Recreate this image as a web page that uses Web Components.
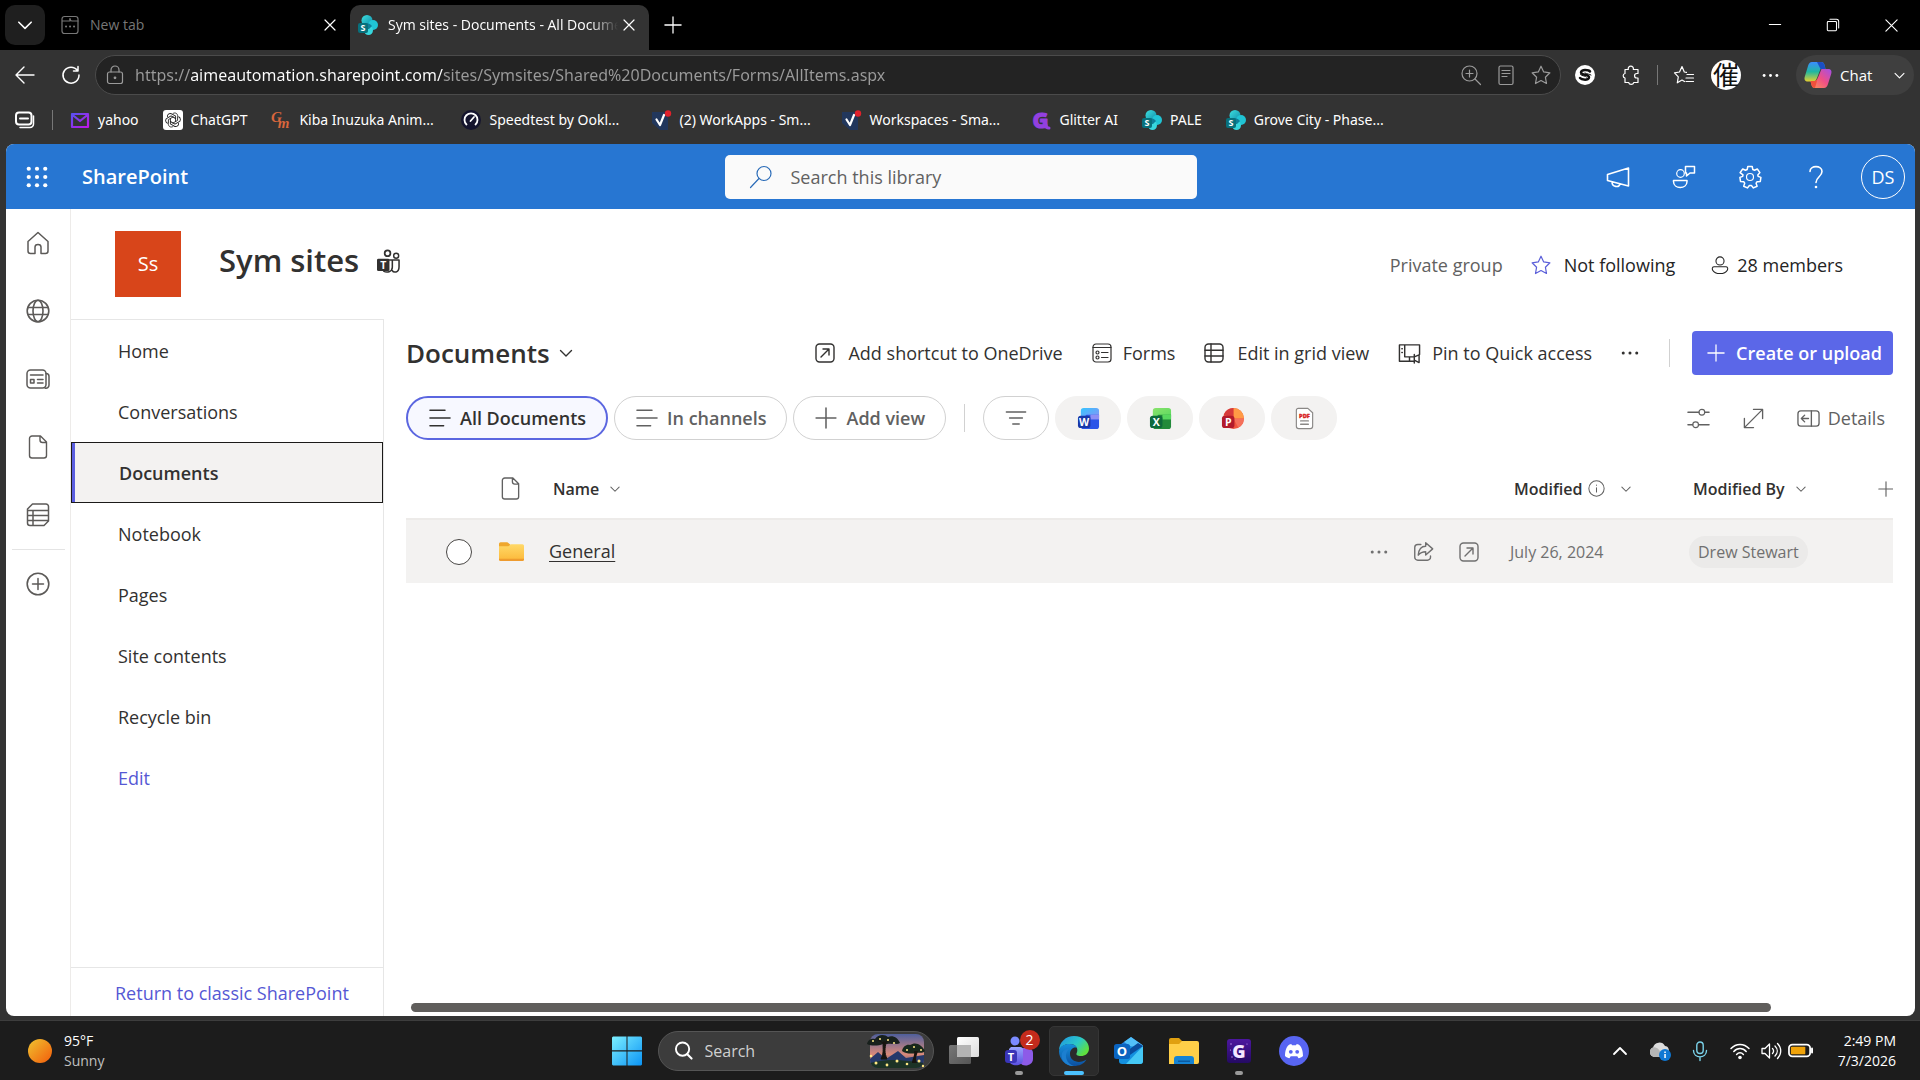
<!DOCTYPE html>
<html lang="en">
<head>
<meta charset="utf-8">
<title>Sym sites - Documents - All Documents</title>
<style>
  html, body { margin: 0; height: 100%; }
  body {
    display: flex; flex-direction: column; background: #333; overflow: hidden;
    font-family: "Open Sans", "Noto Sans", sans-serif; font-size: 18px; line-height: 24px; color: #323130;
  }
  page-frame { flex: 1; min-height: 0; }
</style>
</head>
<body>
<tab-strip></tab-strip>
<address-bar></address-bar>
<bookmark-bar></bookmark-bar>
<page-frame>
  <suite-header slot="top"></suite-header>
  <app-rail slot="rail"></app-rail>
  <site-header slot="site"></site-header>
  <site-nav slot="nav"></site-nav>
  <doc-library></doc-library>
</page-frame>
<task-bar></task-bar>

<script>
const S = (box, body, extra = '') => `<svg viewBox="0 0 ${box} ${box}" fill="none" stroke="currentColor" stroke-width="1.2" stroke-linecap="round" stroke-linejoin="round" ${extra}>${body}</svg>`;
const sharepoint = S(20, `<defs><linearGradient id="a" x1="0" y1="0" x2="1" y2="1"><stop stop-color="#3de0e0"/><stop offset="1" stop-color="#0f8ca8"/></linearGradient></defs>
  <g stroke="none"><circle cx="9" cy="5.500" r="5.500" fill="url(#a)"/><circle cx="15" cy="10" r="5" fill="#20c4d4"/><circle cx="10.500" cy="15.500" r="4.500" fill="#37d6dd"/><path d="M5 9a7 7 0 0 1 9 2l-3 3H5z" fill="#107d98"/><rect x="0" y="8" width="10" height="10" rx="2" fill="#08707c"/><text x="5" y="16" font-size="9" font-weight="700" text-anchor="middle" fill="#fff">S</text></g>`);
const sheet = S(20, `<g stroke="none"><path d="M1 2h16v18H1z" fill="#22375c"/><path d="M1 20h8l-8-7z" fill="#333"/></g><path d="M5.500 9.500l3.500 5.500 4-10" stroke="#fff" stroke-width="2.200"/><circle cx="17" cy="3.500" r="3.200" fill="#e0212b" stroke="none"/>`);
const office = (c1, c2, c3, c4, ch) => S(24, `<defs><linearGradient id="a" x1="0" y1="0" x2="1" y2="1"><stop stop-color="${c1}"/><stop offset="1" stop-color="${c2}"/></linearGradient></defs><g stroke="none"><rect x="4" y="1" width="19" height="12" rx="3" fill="url(#a)"/><path d="M10 8h13v12a3 3 0 0 1-3 3H7a3 3 0 0 1-3-3v-7z" fill="${c3}"/><path d="M14 8h9v5h-9z" fill="${c2}"/><rect x="1" y="9" width="13" height="13" rx="3" fill="${c4}"/><text x="7.500" y="19.500" font-size="11" font-weight="700" text-anchor="middle" fill="#fff">${ch}</text></g>`);
const petal = [0, 60, 120, 180, 240, 300].map(r => `<path d="M10 3.500c2-1.500 5 0 4.600 2.900v4L10 13" transform="rotate(${r} 10 10)"/>`).join('');
const ICONS = {
  chevron: S(16, '<path d="M2.500 5.500L8 11l5.500-5.500" stroke-width="1.400"/>'),
  chevup: S(16, '<path d="M2 11l6-6 6 6" stroke-width="1.800"/>'),
  close: S(16, '<path d="M3 3l10 10M13 3L3 13"/>'),
  plus: S(20, '<path d="M10 1v18M1 10h18" stroke-width="1.400"/>'),
  minimize: S(16, '<path d="M1.500 7.500h13" stroke-width="1.200"/>'),
  restore: S(16, '<rect x="1.500" y="4" width="10.500" height="10.500" rx="1"/><path d="M4.500 1.500h7.500a2.500 2.500 0 0 1 2.500 2.500v7.500"/>'),
  x: S(16, '<path d="M2 2l12 12M14 2L2 14"/>'),
  newtab: S(20, '<path d="M2 6V4a2.500 2.500 0 0 1 2.500-2.500h11A2.500 2.500 0 0 1 18 4v12a2.500 2.500 0 0 1-2.500 2.500h-11A2.500 2.500 0 0 1 2 16V6h8V3.500"/><path d="M10 4a2 2 0 0 0 2 2h6"/><path d="M6 11.500h.1M10 11.500h.1M14 11.500h.1" stroke-width="2"/>'),
  back: S(20, '<path d="M19 10H1.500M9 2L1 10l8 8" stroke-width="1.400"/>'),
  reload: S(20, '<path d="M16.500 5.500A8 8 0 1 0 18 10M17 1.500v4.500h-4.500" stroke-width="1.500"/>'),
  lock: S(20, '<rect x="2.500" y="7" width="15" height="11.500" rx="2"/><path d="M6 7V5a4 4 0 0 1 8 0v2"/><circle cx="10" cy="12.800" r=".8" fill="currentColor"/>'),
  zoomin: S(20, '<circle cx="8.500" cy="8.500" r="7.500"/><path d="M14 14l5.500 5.500M8.500 5v7M5 8.500h7"/>'),
  reader: S(20, '<rect x="3" y="1" width="14" height="18.500" rx="1.500"/><path d="M6 5.500h8M6 8.500h8M6 11.500h5"/>'),
  star: S(20, '<path d="M10 1.200l2.700 5.700 6.200.9-4.500 4.400 1.100 6.300L10 15.500l-5.500 3 1.100-6.300L1.100 7.800l6.200-.9z"/>'),
  sbadge: S(20, '<circle cx="10" cy="10" r="10" fill="#fff" stroke="none"/><path d="M15 6.500c-1-1.500-9-2.500-9 .8 0 3.500 8 1.500 8 5 0 3.500-7.500 2.500-9 .7" stroke="#111" stroke-width="2.500"/><path d="M5.500 9.500c2 2 5 1 6 2.500M16 10c-1.500-1-4-.8-6-2" stroke="#111" stroke-width="1"/>'),
  puzzle: S(20, '<path d="M4 4.500h3.300a2.600 2.600 0 1 1 5 0H17v4h-1.200a2.200 2.200 0 0 0 0 4.500H17v4.500h-4.200a2.700 2.700 0 0 1-5.200 0H4V13a2.300 2.300 0 0 1 0-4.500z"/>'),
  favs: S(20, '<path d="M12.500 7.400L10.300 7 8 1.500 5.500 7l-5 .8 3.800 4-1 6L8 15l2.500 1.500M13 9.500h6.500M12 13h7.500M12 16.500h7.500"/>'),
  dots: S(20, '<g fill="currentColor" stroke="none"><circle cx="2.500" cy="10" r="1.700"/><circle cx="10" cy="10" r="1.700"/><circle cx="17.500" cy="10" r="1.700"/></g>'),
  profile: S(30, '<circle cx="15" cy="15" r="15" fill="#fff" stroke="none"/><text x="15" y="25" font-family="Noto Sans CJK JP" font-size="26" text-anchor="middle" fill="#111" stroke="none">催</text>'),
  copilot: S(28, `<defs><linearGradient id="a" x1="0" y1="0" x2="0" y2="1"><stop stop-color="#3b8dff"/><stop offset=".5" stop-color="#20b7a0"/><stop offset="1" stop-color="#e5d02f"/></linearGradient><linearGradient id="b" x1="1" y1="0" x2="0" y2="1"><stop stop-color="#a24fe8"/><stop offset=".5" stop-color="#ef4f86"/><stop offset="1" stop-color="#fb9a50"/></linearGradient></defs><g stroke="none"><path d="M8 1h9c2 0 3 1 3.500 3l1 4h-5l-3.500 9c-1 2.500-2 3.500-4 3.500H4c-3 0-4-2-3.300-4.500L4 5C4.800 2.500 6 1 8 1z" fill="url(#a)"/><path d="M13 1h4c2 0 3 1 3.500 3l1 4h-5z" fill="#1b4ec4"/><path d="M20 27h-9c-2 0-3-1-3.500-3l-1-4H10c2 0 3-1 4-3.500L17.500 8H24c3 0 4 2 3.300 4.500L24 23c-.8 2.500-2 4-4 4z" fill="url(#b)"/><path d="M11 27c-2 0-3-1-3.500-3l-1-4H10c1.500 0 2.500-.5 3.500-2z" fill="#f0503c"/></g>`),
  collapse: S(20, '<rect x="1" y="2.500" width="15.500" height="12" rx="3" stroke-width="2"/><path d="M5 8.500h8" stroke-width="2"/><path d="M18.500 6v8a3.500 3.500 0 0 1-3.500 3.500H5" stroke-width="1.500"/>'),
  yahoo: S(20, '<defs><linearGradient id="a" x1="0" y1="0" x2="1" y2="1"><stop stop-color="#5a50f0"/><stop offset="1" stop-color="#c016e8"/></linearGradient></defs><path d="M2 4h16v13H2zM2 4.500l8 6.500 8-6.500" stroke="url(#a)" stroke-width="2.200"/>'),
  chatgpt: S(20, `<rect width="20" height="20" rx="3" fill="#fff" stroke="none"/><g stroke="#222" stroke-width=".9">${petal}</g>`),
  gm: S(20, '<text x="0" y="12" font-family="Liberation Serif, serif" font-style="italic" font-weight="700" font-size="15" fill="#d9663c" stroke="none">G<tspan dx="-4" dy="6">m</tspan></text>'),
  speed: S(20, '<circle cx="10" cy="10" r="10" fill="#15152e" stroke="none"/><path d="M5.500 14.500a6.500 6.500 0 1 1 9 0" stroke="#fff" stroke-width="1.800"/><path d="M9.500 11l3.500-4" stroke="#fff" stroke-width="1.800"/>'),
  glitter: S(20, '<text x="9.500" y="17.500" font-size="22" font-weight="800" text-anchor="middle" fill="#9340e0" stroke="#9340e0">G</text><path d="M15 15c0 2 1 3 3 3" stroke="#9340e0" stroke-width="3"/>'),
  sheet, sharepoint,
  waffle: S(24, '<g fill="currentColor" stroke="none"><circle cx="3" cy="3" r="2.300"/><circle cx="12" cy="3" r="2.300"/><circle cx="21" cy="3" r="2.300"/><circle cx="3" cy="12" r="2.300"/><circle cx="12" cy="12" r="2.300"/><circle cx="21" cy="12" r="2.300"/><circle cx="3" cy="21" r="2.300"/><circle cx="12" cy="21" r="2.300"/><circle cx="21" cy="21" r="2.300"/></g>'),
  search: S(24, '<circle cx="15" cy="8.500" r="7"/><path d="M10 13.500L1.500 22.500"/>'),
  megaphone: S(24, '<path d="M1.500 9.500L22.500 3v18L1.500 15.500zM6 17c0 5 7 6 8 2" stroke-width="1.600"/>'),
  feedback: S(24, '<circle cx="8.500" cy="8.500" r="3.800"/><path d="M1.500 15.500h13.500v1c0 8-13.500 8-13.500 0zM13.500 1.500h9v6.500h-4.500l-3.500 3V8h-1z" stroke-width="1.500"/>'),
  gear: S(24, '<circle cx="12" cy="12" r="3.500"/><path d="M9.800 1.500h4.400l.6 3 1.700.8L19.300 4l2.600 3.600-2.100 2.300.3 1.500 2.800 1-.6 4-3.200.3-1 1.500 1 3-3.700 1.700-2-2.400h-2l-2 2.400-3.700-1.700 1-3-1-1.500-3.200-.3-.6-4 2.800-1 .3-1.500L2.100 7.600 4.700 4l2.800 1.300 1.700-.8z" stroke-width="1.500"/>'),
  help: S(24, '<path d="M6 6.500C6 0 18 0 18 6.500c0 5-6 5.500-6 11" stroke-width="1.600"/><circle cx="12" cy="22" r="1.300" fill="currentColor" stroke="none"/>'),
  home: S(24, '<path d="M2 10.500L12 1.500l10 9V20a2.500 2.500 0 0 1-2.500 2.500H15V16c0-3.500-6-3.500-6 0v6.500H4.500A2.500 2.500 0 0 1 2 20z" stroke-width="1.500"/>'),
  globe: S(24, '<circle cx="12" cy="12" r="10.800"/><ellipse cx="12" cy="12" rx="5" ry="10.800"/><path d="M2 8.500h20M2 15.500h20" />', 'style="stroke-width:1.600"'),
  news: S(24, '<rect x="1" y="3" width="19" height="18" rx="3.500"/><path d="M20 6.500c2 0 3 1 3 3V18a3 3 0 0 1-4 3M4.500 8h12.500M11.500 12.500H17M11.500 16H17M4.500 12.500h3.500V16H4.500z"/>', 'style="stroke-width:1.500"'),
  file: S(24, '<path d="M6 1h8.500L20.500 7v13.500a2.500 2.500 0 0 1-2.500 2.500H6a2.500 2.500 0 0 1-2.500-2.500v-17A2.500 2.500 0 0 1 6 1zM14 1v4a2.500 2.500 0 0 0 2.500 2.500h4" stroke-width="1.400"/>'),
  list: S(24, '<path d="M6.500 1H20a2.500 2.500 0 0 1 2.500 2.500V18L18 22.500H4A2.500 2.500 0 0 1 1.500 20V6zM1.500 7.500h21M1.500 12.500h21M1.500 17.500H22M7 7.500v15"/>', 'style="stroke-width:1.500"'),
  add: S(24, '<circle cx="12" cy="12" r="10.800" stroke-width="1.600"/><path d="M12 6.500v11M6.500 12h11" stroke-width="1.500"/>'),
  teams: S(24, '<circle cx="11" cy="3.500" r="3" stroke-width="1.800"/><circle cx="20" cy="6" r="2.600" stroke-width="1.500"/><path d="M13 10.500h10v7c0 7-6 6-7 4M7 22c3 2 9 1 9-4v-7.500" stroke-width="1.600"/><rect x="0" y="9" width="13" height="13" rx="1.500" fill="currentColor" stroke="none"/><text x="6.500" y="19.500" font-size="11" font-weight="700" text-anchor="middle" fill="#fff" stroke="none">T</text>'),
  person: S(20, '<circle cx="10" cy="5.500" r="4.500"/><path d="M3.500 12h13c4 0 2.500 7.500-6.500 7.500S-.500 12 3.500 12z"/>'),
  shortcut: S(20, '<rect x="1" y="1" width="18" height="18" rx="3.500"/><path d="M6 14l8-8M8 6h6v6"/>', 'style="stroke-width:1.400"'),
  forms: S(20, '<rect x="1" y="1" width="18" height="18" rx="3"/><path d="M1 4.500h18M9.500 9.500H16M9.500 14.500H16"/><circle cx="5.500" cy="9.500" r="1.500"/><circle cx="5.500" cy="14.500" r="1.500"/>'),
  grid: S(20, '<rect x="1" y="1" width="18" height="18" rx="3.500"/><path d="M7 1v18M1 7.200h18M1 13h18"/>', 'style="stroke-width:1.400"'),
  pin: S(24, '<path d="M12 20H1.500V3h21v10M7 3v12.500h10M4 7h.5M4 11h.5M17 13v7M17 15.500l5-2v8l-5-2.500M12 16v4h5v2"/>', 'style="stroke-width:1.500"'),
  lines: S(24, '<path d="M1 3.500h16.500M1 12h22M1 20.500h15" stroke-width="1.500"/>'),
  filter: S(24, '<path d="M1.500 5.500h21M5 12h14M8.500 18.500h7" stroke-width="1.600"/>'),
  sliders: S(24, '<path d="M1 5.500h11.500M18.500 5.500H23M1 18.500h5M12 18.500h11" stroke-width="1.500"/><circle cx="15.500" cy="5.500" r="3"/><circle cx="9" cy="18.500" r="3"/>'),
  expand: S(24, '<path d="M2.500 21.500l19-19M12 2.500h9.500V12M2.500 12v9.500H12" stroke-width="1.400"/>'),
  panel: S(24, '<rect x="1" y="4" width="22" height="16" rx="3"/><path d="M15 4v16M12 12H4.500M8 8.500L4.500 12 8 15.500"/>', 'style="stroke-width:1.400"'),
  info: S(20, '<circle cx="10" cy="10" r="9"/><path d="M10 9v5M10 6v.2"/>'),
  share: S(24, '<path d="M9 4H5.500A3.500 3.500 0 0 0 2 7.500v11A3.500 3.500 0 0 0 5.500 22h11a3.500 3.500 0 0 0 3.500-3.500V17"/><path d="M14.500 2l8 7-8 7v-3.800c-4 0-6 .8-8.500 4C6.500 9.500 10 6 14.500 6z"/>', 'style="stroke-width:1.600"'),
  folder: S(24, '<defs><linearGradient id="a" x1="0" y1="0" x2="0" y2="1"><stop stop-color="#ffd968"/><stop offset="1" stop-color="#fcb839"/></linearGradient></defs><g stroke="none"><path d="M0 4.500A1.500 1.500 0 0 1 1.500 3H8l3 2.500V9H0z" fill="#efa72e"/><path d="M0 7h9l2.500-2h11A1.500 1.500 0 0 1 24 6.500v13a1.500 1.500 0 0 1-1.500 1.500h-21A1.500 1.500 0 0 1 0 19.500z" fill="url(#a)"/><path d="M0 19h24v.5a1.500 1.500 0 0 1-1.500 1.500h-21A1.500 1.500 0 0 1 0 19.500z" fill="#ee9b2e"/></g>'),
  word: office('#35c5ff', '#8d8ff5', '#2b55e8', '#1838a8', 'W'),
  excel: office('#8ae36c', '#57d85e', '#228a3a', '#0e6a3c', 'X'),
  ppt: S(24, '<g stroke="none"><circle cx="13" cy="12" r="11" fill="#f0563d"/><path d="M13 1a11 11 0 0 1 11 11H13z" fill="#ff9a45"/><path d="M13 1A11 11 0 0 0 3 8l10 4z" fill="#d53a3a"/><path d="M13 12h11a11 11 0 0 1-6 9.500z" fill="#f5705a"/><rect x="1" y="9" width="13" height="13" rx="3" fill="#b31b2b"/><text x="7.500" y="19.500" font-size="11" font-weight="700" text-anchor="middle" fill="#fff">P</text></g>'),
  pdf: S(24, '<path d="M5.500 1.500h10L20.500 6v14a2.500 2.500 0 0 1-2.500 2.500H6A2.500 2.500 0 0 1 3.500 20V3.500a2 2 0 0 1 2-2z" fill="#fff" stroke="#8a8886"/><text x="12" y="11" font-size="6" font-weight="800" text-anchor="middle" fill="#d81e1e" stroke="#d81e1e" stroke-width=".3">PDF</text><path d="M8 14.500h8M8 18h8" stroke="#8a8886" stroke-width="1.500"/>'),
  sun: S(24, '<defs><linearGradient id="a" x1="0" y1="0" x2="1" y2="1"><stop offset=".1" stop-color="#f0b92c"/><stop offset=".9" stop-color="#f2660f"/></linearGradient></defs><circle cx="12" cy="12" r="12" fill="url(#a)" stroke="none"/>'),
  start: S(30, '<defs><linearGradient id="a" gradientUnits="userSpaceOnUse" x1="0" y1="0" x2="30" y2="30"><stop stop-color="#7df0ff"/><stop offset="1" stop-color="#0a93f5"/></linearGradient></defs><path d="M1 .5h13.500v13.700H0V1.500zM15.500.5H29l1 1v12.700H15.500zM0 15.500h14.500v14H1l-1-1zM15.500 15.500H30v13l-1 1H15.500z" fill="url(#a)" stroke="none"/>'),
  find: S(20, '<circle cx="9" cy="8.500" r="7" stroke-width="2"/><path d="M14 14l4.500 4.500" stroke-width="2.200"/>'),
  taskview: S(30, '<defs><linearGradient id="a" x1="0" y1="0" x2="1" y2="1"><stop stop-color="#777"/><stop offset="1" stop-color="#555"/></linearGradient><linearGradient id="b" x1="0" y1="0" x2="1" y2="1"><stop stop-color="#fff"/><stop offset="1" stop-color="#dcdcdc"/></linearGradient></defs><g stroke="none"><rect x="0" y="9" width="22" height="19" rx="1.500" fill="url(#a)"/><rect x="8" y="1" width="22" height="20" rx="1.500" fill="url(#b)"/><path d="M8 9h14v12H9.500A1.500 1.500 0 0 1 8 19.500z" fill="#b4b4b4"/></g>'),
  teamsapp: S(30, '<defs><linearGradient id="a" x1="0" y1="0" x2="0" y2="1"><stop stop-color="#9aa6ff"/><stop offset="1" stop-color="#5a4fe0"/></linearGradient></defs><g stroke="none"><circle cx="11" cy="5" r="4.500" fill="#7b8bff"/><path d="M17 12h7a5 5 0 0 1 5 5v6c0 7-11 9-13 3z" fill="#8d5be8"/><path d="M7 11h9a3 3 0 0 1 3 3v10c0 7-14 7-14 0V13z" fill="url(#a)"/><rect x="1" y="14" width="12" height="13" rx="3" fill="#3a35b8"/><text x="7" y="24.500" font-size="11" font-weight="700" text-anchor="middle" fill="#fff">T</text></g>'),
  edge: S(30, '<defs><linearGradient id="a" x1="0" y1="0" x2="1" y2=".6"><stop offset=".1" stop-color="#219be0"/><stop offset=".6" stop-color="#2bc8c8"/><stop offset="1" stop-color="#5fe03e"/></linearGradient><linearGradient id="b" x1="0" y1="0" x2="0" y2="1"><stop stop-color="#1590dc"/><stop offset="1" stop-color="#0c4fa0"/></linearGradient></defs><g stroke="none"><path d="M0 15C0 6 7 0 15 0c9 0 15 6 15 12.500 0 5-4 7.500-8 7.500-4 0-5-1.500-4.500-2.500C20 13 17 8 11 8 5 8 1 11 0 15z" fill="url(#a)"/><path d="M0 15c1-4.500 5-7 10.500-7 4 0 6.500 1.500 7.500 4-3-1.500-7 1-7 6 0 6 6 9 12 7.500 2-.5 3.500-1.500 4.500-2C25 28 20 30 15 30 6 30 0 23 0 15z" fill="url(#b)"/><path d="M11 12.500c-3 2-5 6-3.500 10.500 1 3.500 4 6 7.500 7-9 .5-14-6.500-12-13 1.500-3 4.500-4.800 8-4.500z" fill="#1c7fd0"/></g>'),
  outlook: S(30, '<g stroke="none"><path d="M5 9.500L17 1l12 8.500L17 18z" fill="#1f7ad8"/><path d="M10 6l7-5 12 8.500-6 5z" fill="#52c0f8"/><path d="M5 11l24-1v15a3 3 0 0 1-3 3H8a3 3 0 0 1-3-3z" fill="#1490df"/><path d="M29 10v15a3 3 0 0 1-3 3H12z" fill="#45c8f5"/><path d="M29 10L13 21v-6L24 7z" fill="#0a4c9c"/><rect x="0" y="8" width="16" height="15" rx="2.500" fill="#0b64c0"/><text x="8" y="20" font-size="13" font-weight="700" text-anchor="middle" fill="#fff">O</text></g>'),
  explorer: S(30, '<g stroke="none"><path d="M0 4a2 2 0 0 1 2-2h8l3 3v5H0z" fill="#e0a010"/><path d="M0 8h10l3-3h15a2 2 0 0 1 2 2v19a2 2 0 0 1-2 2H0z" fill="#ffcf48"/><path d="M5 28v-5a3 3 0 0 1 3-3h14a3 3 0 0 1 3 3v5z" fill="#1583d4"/><path d="M9 24.500h12v1.500H9z" fill="#0c5aa0"/></g>'),
  gapp: S(24, '<defs><linearGradient id="a" x1="0" y1="0" x2="0" y2="1"><stop stop-color="#4d17a0"/><stop offset="1" stop-color="#240a63"/></linearGradient></defs><rect width="24" height="24" rx="3" fill="url(#a)" stroke="none"/><text x="12" y="18.500" font-size="18" font-weight="800" text-anchor="middle" fill="#f3e8ff" stroke="none">G</text><g fill="#c89bff" stroke="none"><circle cx="4" cy="5" r=".7"/><circle cx="5" cy="18" r=".7"/><circle cx="8" cy="20" r=".6"/><circle cx="20" cy="5" r=".6"/><circle cx="3.500" cy="11" r=".6"/></g>'),
  discord: S(30, '<g stroke="none"><circle cx="15" cy="15" r="15" fill="#5865f2"/><path d="M10.500 8.500l1.800-.5.700 1.300h4l.7-1.300 1.800.5c3 1.500 4.500 6.500 4.500 11.500-1.500 1.500-3 2-4.500 2.300l-1.200-2h-6.600l-1.200 2C9 22 7.500 21.500 6 20c0-5 1.500-10 4.500-11.500z" fill="#fff"/><circle cx="11.800" cy="15.800" r="1.900" fill="#5865f2"/><circle cx="18.200" cy="15.800" r="1.900" fill="#5865f2"/></g>'),
  cloud: S(22, '<g stroke="none"><path d="M5 17a5 5 0 0 1-1-9.500A6.500 6.500 0 0 1 16 6c3 0 4 3 4 5s-2 6-5 6z" fill="#dcdcdc"/><path d="M5 17a5 5 0 0 1-1-9.500c4-1 8 3 9 9.500z" fill="#b5b5b5"/><circle cx="16" cy="15" r="6" fill="#0f78d4"/><path d="M15.300 14h1.500v4h-1.500zM15.300 11.500h1.500V13h-1.500z" fill="#fff"/></g>'),
  mic: S(20, '<g stroke="#7bd3ea" stroke-width="1.400"><rect x="6.800" y="1" width="6.400" height="11.500" rx="3.200"/><path d="M3.500 9.500c0 8.500 13 8.500 13 0M10 16v3.500"/></g>'),
  wifi: S(20, '<path d="M1 7.500c5-5.500 13-5.500 18 0M3.800 10.500c3.500-4 9-4 12.400 0M6.600 13.500c2-2.200 4.800-2.200 6.800 0" stroke-width="1.500"/><circle cx="10" cy="16.500" r="1.800" fill="currentColor" stroke="none"/>'),
  speaker: S(20, '<path d="M1 7.500h3L8.500 3v14L4 12.500H1zM11.500 7.500c1.300 1.500 1.300 3.500 0 5M14 5c3 3 3 7 0 10M16.500 2.500c4.300 4.500 4.300 10.500 0 15" stroke-width="1.300"/>'),
  battery: S(26, '<rect x="1" y="7" width="22" height="12" rx="3.500" stroke-width="1.800"/><rect x="3" y="9" width="15" height="8" rx="1" fill="#f0a30a" stroke="none"/><path d="M25 11v4" stroke-width="2"/>'),
  scene: `<svg viewBox="0 0 60 38"><defs><linearGradient id="a" x1="0" y1="0" x2="0" y2="1"><stop stop-color="#4f5f9c"/><stop offset=".6" stop-color="#d98a7a"/><stop offset="1" stop-color="#33406a"/></linearGradient><clipPath id="c"><rect x="4" y="2" width="54" height="34" rx="8"/></clipPath></defs><g clip-path="url(#c)"><path d="M4 2h54v34H4z" fill="url(#a)"/><path d="M4 27l8-7 8 7 12-8 8 7 18-3v15H4z" fill="#26396b"/><path d="M4 31c18-5 34-3 54 0v5H4z" fill="#1c3326"/></g><path d="M1 12c1-5 5-6 8-5 3-5 10-5 13-2 5-2 10 1 12 6-3 2-6 0-8 1-4-1-6 1-9 0-5 2-12 2-16 0z" fill="#17201c"/><path d="M17 11l-5-3M18 11l6-3M17 10c0 8 1 11-2 17h6c-3-7-2-10-1-17z" fill="#17140f" stroke="#17140f"/><path d="M36 19c1-5 5-7 8-6 6-4 12 0 15 6-3 3-6 1-9 2-4 1-10 1-14-2z" fill="#17281c"/><path d="M48 19c1 5-2 8-2 12h5c-2-5 0-8 1-12z" fill="#17140f"/><g fill="#ffe884"><circle cx="7" cy="9" r="1"/><circle cx="14" cy="7" r="1"/><circle cx="22" cy="8" r="1"/><circle cx="28" cy="11" r="1"/><circle cx="41" cy="18" r="1"/><circle cx="48" cy="15" r="1"/><circle cx="55" cy="18" r="1"/><circle cx="5" cy="24" r="1.300"/><circle cx="10" cy="31" r="1.500"/><circle cx="21" cy="33" r="1.400"/><circle cx="31" cy="29" r="1.500"/><circle cx="41" cy="32" r="1.300"/><circle cx="53" cy="29" r="1.500"/><circle cx="57" cy="34" r="1.200"/></g></svg>`
};

/* Base class: puts a stylesheet and markup in an open shadow root. */
const RESET = `
  :host, * { box-sizing: border-box; }
  button, input { font: inherit; color: inherit; background: none; border: 0; padding: 0; margin: 0; outline: 0; }
  button { display: inline-flex; align-items: center; justify-content: center; white-space: nowrap; }
  a { color: inherit; text-decoration: none; }
  .grow { flex: 1; }`;
class View extends HTMLElement {
  constructor() {
    super();
    const t = document.createElement('template');
    t.innerHTML = `<style>${RESET}${this.constructor.css}</style>${this.constructor.html}`;
    this.attachShadow({ mode: 'open' }).append(t.content.cloneNode(true));
  }
}
const define = (name, css, html) => customElements.define(name, class extends View {
  static css = css;
  static html = html;
});

/* <ui-icon name="…" style="--s: 24px"> */
customElements.define('ui-icon', class extends HTMLElement {
  connectedCallback() {
    if (this.shadowRoot) return;
    this.attachShadow({ mode: 'open' }).innerHTML = `<style>
      :host { display: inline-flex; flex: none; width: var(--s, 20px); height: var(--s, 20px); }
      svg { width: 100%; height: 100%; overflow: visible; }</style>${ICONS[this.getAttribute('name')]}`;
    this.setAttribute('aria-hidden', 'true');
  }
});
const icon = (name, size = 20) => `<ui-icon name="${name}" style="--s:${size}px"></ui-icon>`;

define('tab-strip', `
  :host { display: flex; height: 50px; background: #000; color: #fff; font-size: 14px; line-height: 20px; align-items: flex-end; padding-left: 5px; }
  .menu { width: 40px; height: 40px; border-radius: 10px; background: #1f1f1f; margin-bottom: 5px; }
  .tab { display: flex; align-items: center; height: 45px; gap: 10px; }
  .idle { width: 305px; padding: 0 12px 5px 15px; color: #777; }
  .idle button { color: #fff; }
  .active { width: 299px; padding: 0 12px 5px 8px; background: #333; border-radius: 10px 10px 0 0; }
  .title { flex: 1; min-width: 0; white-space: nowrap; overflow: hidden; }
  .active .title { mask-image: linear-gradient(to right, #000 88%, transparent); }
  .active button { margin-left: -7px; }
  .add { margin: 0 0 16px 15px; }
  .win { display: flex; height: 50px; align-items: center; }
  .win button { width: 58px; height: 48px; }`,
  `<button class="menu" aria-label="Tab actions">${icon('chevron', 18)}</button>
   <div class="tab idle">${icon('newtab', 20)}<span class="title">New tab</span><button aria-label="Close tab">${icon('close', 16)}</button></div>
   <div class="tab active">${icon('sharepoint', 20)}<span class="title">Sym sites - Documents - All Documents</span><button aria-label="Close tab">${icon('close', 16)}</button></div>
   <button class="add" aria-label="New tab">${icon('plus', 18)}</button>
   <span class="grow"></span>
   <div class="win"><button aria-label="Minimize">${icon('minimize', 14)}</button><button aria-label="Restore">${icon('restore', 14)}</button><button aria-label="Close">${icon('x', 15)}</button></div>`);

define('address-bar', `
  :host { display: flex; align-items: center; height: 50px; padding: 0 6px 0 15px; color: #fff; font-size: 16px; line-height: 22px; gap: 26px; }
  .box { flex: 1; display: flex; align-items: center; gap: 17px; height: 40px; margin: 0 -12px; border: 1px solid #4b4b4b; border-radius: 20px; background: #232323; color: #9b9b9b; padding: 0 9px; }
  .box label { display: flex; flex: 1; align-items: center; gap: 10px; }
  input { flex: 1; height: 30px; font-family: "Noto Sans", sans-serif; color: transparent; background: linear-gradient(to right, #9b9b9b 56px, #fff 56px 308px, #9b9b9b 308px); -webkit-background-clip: text; background-clip: text; }
  .tools { display: flex; align-items: center; gap: 15px; }
  hr { width: 1px; height: 20px; border: 0; background: #777; margin: 0 -1px; }
  .chat { height: 40px; width: 118px; border-radius: 20px; background: #3f3f3f; gap: 8px; padding: 0 8px; justify-content: flex-start; font-size: 15px; }
  .set { display: flex; align-items: center; gap: 17px; }
  .set .ext { margin-left: 9px; }
  .set .more { margin-left: 4px; }`,
  `<button aria-label="Back">${icon('back', 20)}</button>
   <button aria-label="Refresh">${icon('reload', 20)}</button>
   <div class="box">
     <label>${icon('lock', 20)}<input aria-label="Address" value="https://aimeautomation.sharepoint.com/sites/Symsites/Shared%20Documents/Forms/AllItems.aspx"></label>
     <div class="tools"><button aria-label="Zoom">${icon('zoomin', 20)}</button><button aria-label="Reader">${icon('reader', 20)}</button><button aria-label="Favorite">${icon('star', 20)}</button></div>
   </div>
   <div class="set">
     <button aria-label="Extension">${icon('sbadge', 20)}</button>
     <button class="ext" aria-label="Extensions">${icon('puzzle', 20)}</button>
     <hr>
     <button aria-label="Favorites">${icon('favs', 20)}</button>
     <button aria-label="Profile">${icon('profile', 30)}</button>
     <button class="more" aria-label="Settings">${icon('dots', 17)}</button>
     <button class="chat">${icon('copilot', 28)}Chat<span class="grow"></span>${icon('chevron', 13)}</button>
   </div>`);

const mark = (ic, text, long) => `<a href="#" class="${long ? 'long' : ''}">${icon(ic, 20)}<span>${text}</span></a>`;
define('bookmark-bar', `
  :host { display: flex; align-items: center; height: 44px; padding: 0 15px 4px; color: #fff; font-size: 14px; line-height: 20px; gap: 24px; font-family: "Noto Sans", sans-serif; }
  hr { width: 1px; height: 20px; border: 0; background: #777; margin: 0 -7px; }
  a { display: flex; align-items: center; gap: 8px; white-space: nowrap; }
  .long span { width: 138px; }`,
  `<button aria-label="Collapse">${icon('collapse', 20)}</button><hr>
   ${mark('yahoo', 'yahoo')}${mark('chatgpt', 'ChatGPT')}${mark('gm', 'Kiba Inuzuka Anim...', 1)}${mark('speed', 'Speedtest by Ookl...', 1)}
   ${mark('sheet', '(2) WorkApps - Sm...', 1)}${mark('sheet', 'Workspaces - Sma...', 1)}${mark('glitter', 'Glitter AI')}${mark('sharepoint', 'PALE')}${mark('sharepoint', 'Grove City - Phase...', 1)}`);

define('page-frame', `
  :host { display: flex; flex-direction: column; margin: 0 5px 4px 6px; background: #fff; border-radius: 8px; overflow: hidden; }
  .body { display: flex; flex: 1; min-height: 0; }
  .site { display: flex; flex-direction: column; flex: 1; min-width: 0; }
  .cols { display: flex; flex: 1; min-height: 0; }
  ::slotted(doc-library) { flex: 1; min-width: 0; }`,
  `<slot name="top"></slot>
   <div class="body"><slot name="rail"></slot>
     <div class="site"><slot name="site"></slot><div class="cols"><slot name="nav"></slot><slot></slot></div></div>
   </div>`);

define('suite-header', `
  :host { display: grid; grid-template-columns: 1fr 472px 1fr; align-items: center; height: 65px; background: #2776d2; color: #fff; }
  .left { display: flex; align-items: center; gap: 34px; padding-left: 20px; }
  .left a { font-size: 20px; line-height: 28px; font-weight: 600; }
  label { display: flex; align-items: center; gap: 18px; height: 44px; padding: 0 24px; background: #fafafa; border-radius: 5px; color: #2b6cb8; }
  input { flex: 1; color: #616161; }
  input::placeholder { color: #616161; opacity: 1; }
  .right { display: flex; align-items: center; justify-content: flex-end; gap: 42px; padding-right: 10px; }
  .me { width: 44px; height: 44px; border: 1px solid #fff; border-radius: 50%; margin-left: -9px; font-size: 18px; }`,
  `<div class="left"><button aria-label="App launcher">${icon('waffle', 22)}</button><a href="#">SharePoint</a></div>
   <label>${icon('search', 24)}<input type="search" placeholder="Search this library" aria-label="Search this library"></label>
   <div class="right"><button aria-label="What's new">${icon('megaphone', 24)}</button><button aria-label="Feedback">${icon('feedback', 24)}</button><button aria-label="Settings">${icon('gear', 24)}</button><button aria-label="Help">${icon('help', 24)}</button><button class="me">DS</button></div>`);

define('app-rail', `
  :host { display: flex; flex-direction: column; align-items: center; width: 65px; border-right: 1px solid #edebe9; color: #5c5a58; }
  button { width: 64px; height: 68px; }
  hr { width: 53px; height: 1px; border: 0; background: #e4e4e4; margin: 0; }`,
  `<button aria-label="Home">${icon('home', 24)}</button><button aria-label="Sites">${icon('globe', 24)}</button><button aria-label="News">${icon('news', 24)}</button><button aria-label="Files">${icon('file', 24)}</button><button aria-label="Lists">${icon('list', 24)}</button><hr><button aria-label="Create">${icon('add', 24)}</button>`);

define('site-header', `
  :host { display: flex; align-items: center; height: 110px; padding: 0 72px 0 44px; }
  .logo { display: grid; place-items: center; width: 66px; height: 66px; background: #d8451a; color: #fff; font-size: 20px; }
  h1 { margin: 0 18px 8px 38px; font-size: 31px; line-height: 40px; font-weight: 600; }
  .teams { margin-bottom: 6px; }
  .meta { display: flex; align-items: center; gap: 28px; padding-top: 2px; color: #242424; }
  .meta span { color: #616161; }
  .meta button { gap: 13px; }
  .star ui-icon { color: #5b5fd9; }
  .meta .members { gap: 8px; margin-left: 8px; }`,
  `<div class="logo">Ss</div><h1>Sym sites</h1><button class="teams" aria-label="Teams">${icon('teams', 23)}</button><span class="grow"></span>
   <div class="meta"><span>Private group</span><button class="star">${icon('star', 20)}Not following</button><button class="members">${icon('person', 18)}28 members</button></div>`);

define('site-nav', `
  :host { display: flex; flex-direction: column; width: 313px; border-top: 1px solid #e6e6e6; border-right: 1px solid #e6e6e6; }
  nav { display: flex; flex-direction: column; flex: 1; }
  a { display: flex; align-items: center; height: 61px; padding-left: 47px; }
  .on { border: 1px solid #1b1a19; background: #f3f2f1; font-weight: 600; box-shadow: inset 3px 0 #5b5fe0; }
  .edit, footer a { color: #5558d4; }
  footer { border-top: 1px solid #e6e6e6; height: 49px; }
  footer a { height: 50px; padding-left: 44px; }`,
  `<nav><a href="#">Home</a><a href="#">Conversations</a><a href="#" class="on" aria-current="page">Documents</a><a href="#">Notebook</a><a href="#">Pages</a><a href="#">Site contents</a><a href="#">Recycle bin</a><a href="#" class="edit">Edit</a></nav>
   <footer><a href="#">Return to classic SharePoint</a></footer>`);

/* Rounded view switcher / file type filter. Kinds: current, filled, compact. */
customElements.define('view-pill', class extends View {
  static css = `
    :host { display: inline-flex; }
    button { height: 44px; padding: 0 20px 0 21px; border: 1px solid #d1d1d1; border-radius: 22px; gap: 9px; color: #616161; font-weight: 600; }
    :host([current]) button { border: 2px solid #5b66e0; background: #f7f8ff; color: #323130; }
    :host([compact]) button { width: 66px; padding: 0; color: #616161; }
    :host([filled]) button { background: #f3f2f1; border-color: #f3f2f1; }`;
  static html = `<button><slot name="icon"></slot><slot></slot></button>`;
});
const pill = (attrs, ic, size, text = '') => `<view-pill ${attrs}><ui-icon slot="icon" name="${ic}" style="--s:${size}px"></ui-icon>${text}</view-pill>`;

define('doc-library', `
  :host { display: flex; flex-direction: column; padding: 12px 22px 4px; }
  .bar { display: flex; align-items: center; height: 44px; }
  h2 { margin: 0; font-size: 26px; line-height: 34px; font-weight: 600; display: flex; }
  h2 button { gap: 8px; }
  .cmds { display: flex; align-items: center; gap: 29px; }
  .cmds button { gap: 13px; }
  .cmds .tight { gap: 11px; }
  .cmds hr { margin: 0 -7px 0 1px; }
  hr { width: 1px; height: 28px; border: 0; background: #d1d1d1; margin: 0 12px; }
  .cmds .primary { height: 44px; padding: 0 11px 0 15px; background: #5b67e8; color: #fff; border-radius: 4px; font-weight: 600; gap: 11px; }
  .views { margin-top: 21px; gap: 6px; color: #616161; }
  .views .side { display: flex; align-items: center; gap: 32px; padding-right: 8px; }
  .side button { gap: 8px; }
  table { width: 100%; table-layout: fixed; border-collapse: collapse; margin-top: 19px; font-size: 16px; line-height: 22px; }
  .c-check { width: 93px; } .c-type { width: 50px; } .c-acts { width: 140px; } .c-date { width: 179px; } .c-by { width: 189px; } .c-add { width: 15px; }
  th { height: 60px; padding: 0; text-align: left; font-weight: 600; border-bottom: 2px solid #edebe9; }
  th > div, td > div { display: flex; align-items: center; }
  th button { gap: 10px; font-weight: 600; padding-left: 4px; }
  th .near { gap: 6px; } th .near ui-icon + ui-icon { margin-left: 9px; }
  th ui-icon { color: #616161; }
  td { height: 64px; padding: 0; background: #f3f2f1; color: #707070; }
  .pick { display: block; appearance: none; width: 26px; height: 26px; border: 1px solid #484644; border-radius: 50%; background: #fff; margin-left: 40px; }
  .name { font-size: 18px; color: #323130; text-decoration: underline; text-underline-offset: 3px; }
  .acts { gap: 25px; }
  .chip { display: inline-flex; align-items: center; height: 32px; padding: 0 9px; border-radius: 16px; background: #ebeae9; }
  .last { overflow: hidden; }
  .scroll { height: 9px; margin: 0 122px 0 5px; border-radius: 5px; background: #605e5c; }`,
  `<div class="bar">
     <h2><button>Documents${icon('chevron', 16)}</button></h2><span class="grow"></span>
     <div class="cmds">
       <button>${icon('shortcut')}Add shortcut to OneDrive</button><button class="tight">${icon('forms')}Forms</button><button>${icon('grid')}Edit in grid view</button><button class="tight">${icon('pin', 23)}Pin to Quick access</button>
       <button aria-label="More">${icon('dots', 18)}</button><hr>
       <button class="primary">${icon('plus', 18)}Create or upload</button>
     </div>
   </div>
   <div class="bar views">
     ${pill('current', 'lines', 22, 'All Documents')}${pill('', 'lines', 22, 'In channels')}${pill('', 'plus', 22, 'Add view')}<hr>
     ${pill('compact', 'filter', 22)}${pill('compact filled', 'word', 23)}${pill('compact filled', 'excel', 23)}${pill('compact filled', 'ppt', 23)}${pill('compact filled', 'pdf', 23)}
     <span class="grow"></span>
     <div class="side"><button aria-label="View options">${icon('sliders', 23)}</button><button aria-label="Expand">${icon('expand', 23)}</button><button>${icon('panel', 23)}Details</button></div>
   </div>
   <table>
     <colgroup><col class="c-check"><col class="c-type"><col><col class="c-acts"><col class="c-date"><col class="c-by"><col class="c-add"></colgroup>
     <thead><tr><th></th><th><div>${icon('file', 23)}</div></th><th><div><button>Name${icon('chevron', 12)}</button></div></th><th></th><th><div><button class="near">Modified${icon('info', 17)}${icon('chevron', 12)}</button></div></th><th><div><button>Modified By${icon('chevron', 12)}</button></div></th><th class="last"><div>${icon('plus', 16)}</div></th></tr></thead>
     <tbody><tr><td><input class="pick" type="radio" aria-label="Select General"></td><td><div>${icon('folder', 25)}</div></td><td><a class="name" href="#">General</a></td>
       <td><div class="acts"><button aria-label="More">${icon('dots', 18)}</button><button aria-label="Share">${icon('share', 21)}</button><button aria-label="Add shortcut">${icon('shortcut', 20)}</button></div></td>
       <td>July 26, 2024</td><td><span class="chip">Drew Stewart</span></td><td></td></tr></tbody>
   </table>
   <span class="grow"></span><div class="scroll"></div>`);

define('task-bar', `
  :host { display: grid; grid-template-columns: 1fr auto 1fr; align-items: center; height: 60px; padding-left: 10px; border-top: 1px solid #3d3d3d; background: #1c1c1c; color: #fff; font-size: 14px; line-height: 20px; }
  .weather { display: flex; align-items: center; gap: 12px; padding-left: 18px; }
  .weather small { display: block; font-size: inherit; color: #c0c0c0; }
  .apps, .tray { display: flex; align-items: center; }
  .apps button { position: relative; width: 50px; height: 50px; margin-left: 5px; border-radius: 5px; }
  .apps .start { width: 30px; margin: 0 16px 0 0; }
  label { display: flex; align-items: center; gap: 12px; width: 276px; height: 40px; padding: 0 7px 0 15px; border: 1px solid #555; border-radius: 20px; background: #3c3c3c; font-size: 16px; }
  input { flex: 1; min-width: 0; }
  input::placeholder { color: #d0d0d0; opacity: 1; }
  .open::after { content: ""; position: absolute; bottom: 1px; left: 21px; width: 8px; height: 4px; border-radius: 2px; background: #9a9a9a; }
  .front { background: #2b2b2b; border: 1px solid #353535; }
  .front::after { left: 14px; width: 20px; background: #4cc2ff; bottom: 0; }
  .badge { position: absolute; top: 4px; right: 4px; width: 20px; height: 20px; border-radius: 50%; background: #c42b1c; line-height: 20px; text-align: center; }
  .tray { justify-content: flex-end; padding-right: 24px; }
  .tray button { width: 30px; }
  .scene { --s: 60px; height: 38px; }
  .tray .wide { width: 40px; }
  .tray .net { width: 32px; margin-left: 4px; }
  .clock { margin-left: 22px; text-align: right; }`,
  `<div class="weather">${icon('sun', 24)}<div>95°F<small>Sunny</small></div></div>
   <div class="apps">
     <button class="start" aria-label="Start">${icon('start', 30)}</button>
     <label>${icon('find', 19)}<input type="search" placeholder="Search" aria-label="Search"><ui-icon class="scene" name="scene"></ui-icon></label>
     <button aria-label="Task view">${icon('taskview', 30)}</button>
     <button class="open" aria-label="Teams">${icon('teamsapp', 30)}<span class="badge">2</span></button>
     <button class="open front" aria-label="Edge">${icon('edge', 30)}</button>
     <button aria-label="Outlook">${icon('outlook', 30)}</button>
     <button aria-label="File Explorer">${icon('explorer', 30)}</button>
     <button class="open" aria-label="Glitter">${icon('gapp', 24)}</button>
     <button aria-label="Discord">${icon('discord', 30)}</button>
   </div>
   <div class="tray"><button class="wide" aria-label="Hidden icons">${icon('chevup', 16)}</button><button class="wide" aria-label="OneDrive">${icon('cloud', 22)}</button><button class="wide" aria-label="Microphone">${icon('mic', 20)}</button><button class="net" aria-label="Network">${icon('wifi', 20)}</button><button aria-label="Volume">${icon('speaker', 20)}</button><button aria-label="Battery">${icon('battery', 25)}</button>
     <div class="clock">2:49 PM<br>7/3/2026</div></div>`);
</script>
</body>
</html>
